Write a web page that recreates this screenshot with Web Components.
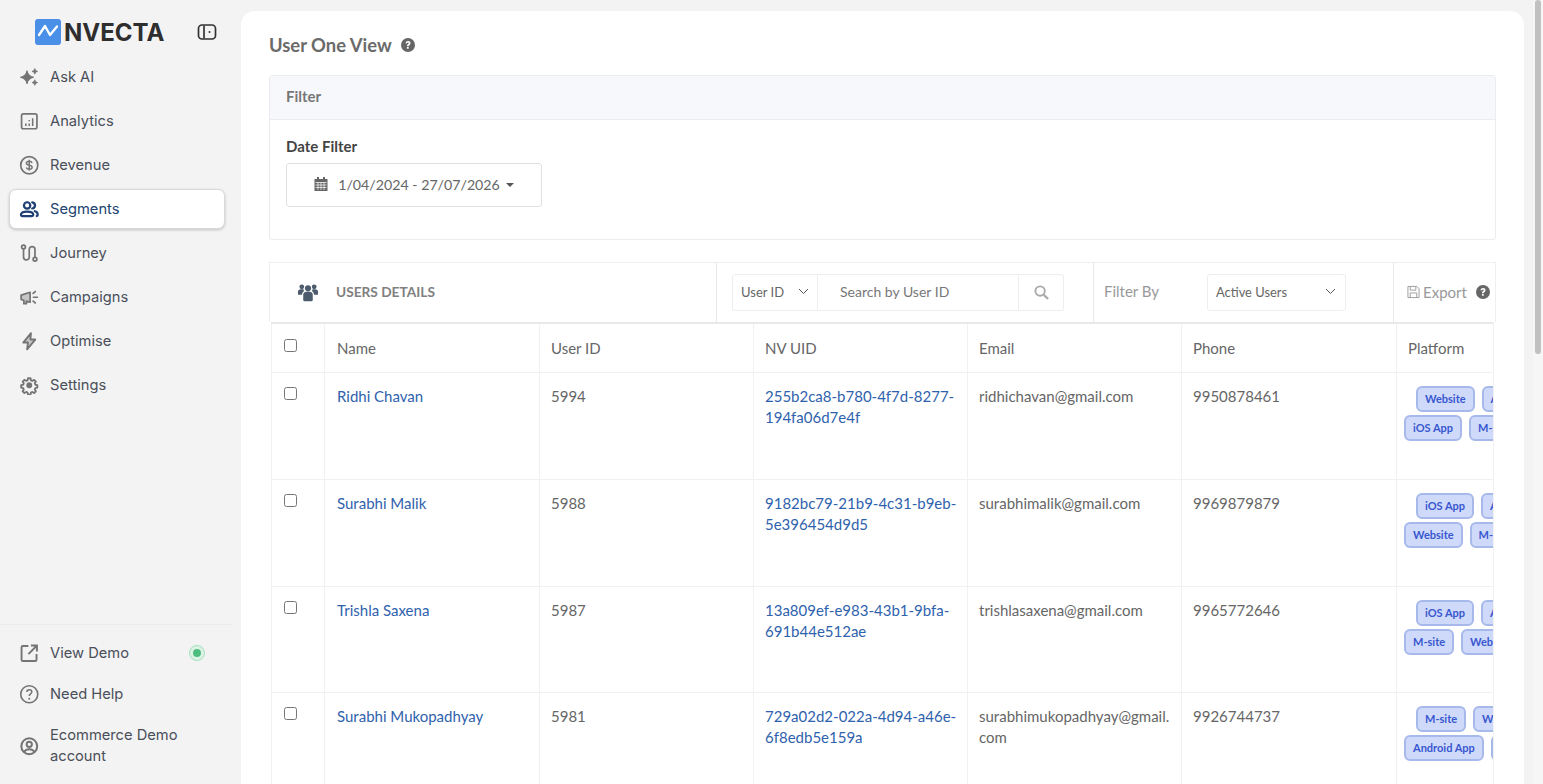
<!DOCTYPE html>
<html>
<head>
<meta charset="utf-8">
<title>User One View</title>
<style>
html, body { margin: 0; height: 100%; overflow: hidden; }
body { background: #f3f3f3; font-family: "Lato", "Liberation Sans", sans-serif; color: #555; }
</style>
</head>
<body>
<nv-shell>
	<nv-sidebar slot="side"></nv-sidebar>
	<nv-page slot="main">
		<nv-filter-panel></nv-filter-panel>
		<nv-users-toolbar></nv-users-toolbar>
		<nv-users-table></nv-users-table>
	</nv-page>
</nv-shell>

<script>
const ICONS = {
	ask: '<path d="M9.400 4.400Q10.600 10.800 17 12 10.600 13.200 9.400 19.600 8.200 13.200 1.800 12 8.200 10.800 9.400 4.400z" fill="currentColor" stroke="currentColor" stroke-width="1.200" stroke-linejoin="round"/><path d="M18.500 1.800Q19 4.600 21.800 5.100 19 5.600 18.500 8.400 18 5.600 15.200 5.100 18 4.600 18.500 1.800zM18.500 14.900Q19 17.700 21.800 18.200 19 18.700 18.500 21.500 18 18.700 15.200 18.200 18 17.700 18.500 14.900z" fill="currentColor" stroke="currentColor" stroke-width=".8" stroke-linejoin="round"/>',
	analytics: '<rect x="3" y="3.300" width="18" height="17.500" rx="2" fill="none" stroke="currentColor" stroke-width="2"/><path d="M8 17.500v-3M12 17.500v-3M12 12v-1.500M16 17.500v-9" fill="none" stroke="currentColor" stroke-width="1.800"/>',
	revenue: '<circle cx="12" cy="12" r="10" fill="none" stroke="currentColor" stroke-width="2"/><path d="M15.400 9.300c-.5-1.300-1.800-2-3.400-2-1.900 0-3.300 1-3.300 2.400 0 3.300 6.700 1.500 6.700 4.700 0 1.400-1.500 2.400-3.400 2.400-1.700 0-3-.8-3.500-2.100M12 5.500v13" fill="none" stroke="currentColor" stroke-width="1.700"/>',
	segments: '<circle cx="9.500" cy="7.500" r="3.700" fill="none" stroke="currentColor" stroke-width="2.600"/><path d="M2.300 18.500c0-2.400 2-3.800 7.200-3.800s7.200 1.400 7.200 3.800c0 1-.6 1.500-1.600 1.500H3.900c-1 0-1.600-.5-1.600-1.500z" fill="none" stroke="currentColor" stroke-width="2.600"/><path d="M15.500 3.900c2 .3 3.200 1.800 3.200 3.600s-1.200 3.300-3.200 3.600M18.500 14.300c2.300.5 3.400 1.900 3.400 3.700 0 1-.3 1.700-1.100 2" fill="none" stroke="currentColor" stroke-width="2.600" stroke-linecap="round"/>',
	journey: '<circle cx="5.300" cy="4.700" r="2.200" fill="none" stroke="currentColor" stroke-width="2"/><circle cx="18.700" cy="19" r="2.200" fill="none" stroke="currentColor" stroke-width="2"/><path d="M5.300 6.900v9.600a3.300 3.300 0 0 0 6.700 0v-9a3.350 3.350 0 0 1 6.700 0v9.300" fill="none" stroke="currentColor" stroke-width="2"/>',
	campaigns: '<path d="M2.500 9.500l10.500-3.300v11.600l-4.300-1.300v3H5.700v-3.900l-3.200-1z" fill="currentColor" fill-opacity=".35" stroke="currentColor" stroke-width="2" stroke-linejoin="round"/><path d="M16.500 7.500l2.500-2.200M17 12h4.500M16.500 16.500l2.500 2.200" fill="none" stroke="currentColor" stroke-width="2" stroke-linecap="round"/>',
	optimise: '<path d="M14 2.500L5 13.500h5.500L9.500 21.500l9.500-11.500h-5.700z" fill="currentColor" fill-opacity=".35" stroke="currentColor" stroke-width="2.200" stroke-linejoin="round"/>',
	settings: '<path d="M10.300 2.500h3.400l.6 2.800 1.900.8 2.400-1.500 2.400 2.400-1.500 2.400.8 1.900 2.700.6v3.400l-2.700.6-.8 1.900 1.500 2.400-2.400 2.400-2.400-1.500-1.900.8-.6 2.800h-3.400l-.6-2.800-1.900-.8-2.400 1.500-2.400-2.400 1.500-2.400-.8-1.900-2.700-.6v-3.400l2.700-.6.8-1.900-1.500-2.400 2.400-2.400 2.400 1.500 1.900-.8z" fill="none" stroke="currentColor" stroke-width="2.500" stroke-linejoin="round" transform="translate(1.700 1.700) scale(.86)"/><circle cx="12" cy="12" r="3.400" fill="currentColor"/>',
	demo: '<path d="M11 3.500H4.500A1.500 1.500 0 0 0 3 5v14.500A1.500 1.500 0 0 0 4.500 21H19a1.500 1.500 0 0 0 1.500-1.500V13" fill="none" stroke="currentColor" stroke-width="2.200"/><path d="M14 3h7v7M20.500 3.500L11 13" fill="none" stroke="currentColor" stroke-width="2.200"/>',
	help: '<circle cx="12" cy="12" r="10" fill="none" stroke="currentColor" stroke-width="1.900"/><path d="M9.100 9.500c0-1.700 1.300-2.800 3-2.800s2.900 1.100 2.900 2.500c0 2.300-3 2.300-3 4.800" fill="none" stroke="currentColor" stroke-width="1.800"/><circle cx="12" cy="17.300" r="1.200" fill="currentColor"/>',
	account: '<circle cx="12" cy="12" r="9.300" fill="none" stroke="currentColor" stroke-width="2.400"/><circle cx="12" cy="9.800" r="3.100" fill="none" stroke="currentColor" stroke-width="2.300"/><path d="M6.300 18.800c.6-2.100 2.800-3.300 5.700-3.300s5.100 1.200 5.700 3.300" fill="none" stroke="currentColor" stroke-width="2.300"/>'
};

const QUESTION = '<circle cx="12" cy="12" r="12" fill="currentColor"/><path d="M7.900 9.200c.2-2.500 1.800-3.900 4.300-3.900s4.100 1.400 4.100 3.500c0 2.900-3.200 2.900-3.200 5.300h-2.900c0-3.800 3.100-3.700 3.100-5.100 0-.8-.6-1.300-1.400-1.300-1 0-1.500.6-1.700 1.700z" fill="#fff"/><rect x="10.200" y="15.500" width="3" height="3" rx=".5" fill="#fff"/>';

class NvShell extends HTMLElement {
	constructor() {
		super();
		this.attachShadow({ mode: 'open' });
		this.shadowRoot.innerHTML = `
		<style>
		:host { display: flex; height: 100vh; overflow: hidden; }
		.side { flex: 0 0 241px; display: flex; }
		.main { flex: 1 1 auto; min-width: 0; padding-top: 11px; display: flex; }
		.bar { flex: 0 0 19px; display: flex; justify-content: flex-end; }
		.track { width: 10px; background: #f6f6f6; }
		.thumb { width: 6px; margin-left: 2px; height: 354px; background: #c1c1c1; border-radius: 3px; }
		</style>
		<div class="side"><slot name="side"></slot></div>
		<div class="main"><slot name="main"></slot></div>
		<div class="bar"><div class="track"><div class="thumb"></div></div></div>`;
	}
}

class NvNavItem extends HTMLElement {
	constructor() {
		super();
		this.attachShadow({ mode: 'open' });
		this.shadowRoot.innerHTML = `
		<style>
		:host { display: flex; align-items: center; min-height: 40px; gap: 11px; padding: 0 0 0 8.500px; box-sizing: border-box; font-size: 14.700px; line-height: 21px; color: #4a4f5a; border: 1px solid transparent; border-radius: 7px; }
		:host([active]) { background: #fff; border-color: #d9d9d9; box-shadow: 0 1px 3px rgba(0,0,0,.2); color: #22436f; }
		svg { flex: 0 0 20.500px; width: 20.500px; height: 20.500px; color: #747474; }
		:host([active]) svg { color: #1d3f72; }
		.label { flex: 1 1 auto; }
		</style>
		<svg viewBox="0 0 24 24"></svg>
		<span class="label"><slot></slot></span>
		<slot name="end"></slot>`;
		this.shadowRoot.querySelector('svg').innerHTML = ICONS[this.getAttribute('icon')] || '';
	}
}

class NvSidebar extends HTMLElement {
	constructor() {
		super();
		this.attachShadow({ mode: 'open' });
		this.shadowRoot.innerHTML = `
		<style>
		:host { display: flex; flex-direction: column; width: 100%; height: 100%; font-family: "Inter", "Liberation Sans", sans-serif; }
		.logo { display: flex; align-items: center; height: 40px; margin-top: 12px; padding: 0 24px 0 35px; }
		.logo svg.mark { width: 26px; height: 26px; flex: none; margin-right: 3px; }
		.logo b { font-size: 24px; font-weight: 700; color: #2e2e2e; flex: 1 1 auto; }
		.logo svg.toggle { width: 20px; height: 20px; flex: none; }
		nav { flex: 1 1 auto; display: flex; flex-direction: column; gap: 4px; padding: 5px 16px 0 9px; }
		footer { border-top: 1px solid #ececec; margin-right: 8px; padding: 8px 8px 16px 9px; display: flex; flex-direction: column; gap: 1px; }
		.dot { width: 8px; height: 8px; border-radius: 50%; background: #4dbd7d; border: 4px solid #dcf2e5; outline: 1px solid #aadfc0; outline-offset: -1px; margin-right: 19px; flex: none; }
		footer nv-nav-item:last-child { margin-top: 9px; }
		</style>
		<div class="logo">
			<svg class="mark" viewBox="0 0 26 26"><rect width="26" height="26" rx="3" fill="#4a90e9"/><path d="M4 16l6-9 5 9 7-8.500" fill="none" stroke="#fff" stroke-width="2.300" stroke-linecap="round" stroke-linejoin="round"/></svg>
			<b>NVECTA</b>
			<svg class="toggle" viewBox="0 0 20 20"><rect x="1.500" y="3" width="17" height="14" rx="3.500" fill="none" stroke="#333" stroke-width="1.700"/><path d="M7 3.500v13" stroke="#333" stroke-width="1.700"/><circle cx="12.500" cy="10" r="1" fill="#333"/></svg>
		</div>
		<nav>
			<nv-nav-item icon="ask">Ask AI</nv-nav-item>
			<nv-nav-item icon="analytics">Analytics</nv-nav-item>
			<nv-nav-item icon="revenue">Revenue</nv-nav-item>
			<nv-nav-item icon="segments" active>Segments</nv-nav-item>
			<nv-nav-item icon="journey">Journey</nv-nav-item>
			<nv-nav-item icon="campaigns">Campaigns</nv-nav-item>
			<nv-nav-item icon="optimise">Optimise</nv-nav-item>
			<nv-nav-item icon="settings">Settings</nv-nav-item>
		</nav>
		<footer>
			<nv-nav-item icon="demo">View Demo<span class="dot" slot="end"></span></nv-nav-item>
			<nv-nav-item icon="help">Need Help</nv-nav-item>
			<nv-nav-item icon="account">Ecommerce Demo account</nv-nav-item>
		</footer>`;
	}
}

class NvPage extends HTMLElement {
	constructor() {
		super();
		this.attachShadow({ mode: 'open' });
		this.shadowRoot.innerHTML = `
		<style>
		:host { display: block; flex: 1 1 auto; min-width: 0; background: #fff; border-radius: 14px 14px 0 0; padding: 0 28px; overflow: hidden; }
		h1 { display: flex; align-items: center; gap: 9px; height: 64px; box-sizing: border-box; padding-top: 4px; margin: 0; font-size: 18.400px; font-weight: 700; color: #6a6a6a; }
		svg { width: 14px; height: 14px; color: #666; }
		</style>
		<h1>User One View <svg viewBox="0 0 24 24">${QUESTION}</svg></h1>
		<slot></slot>`;
	}
}

class NvFilterPanel extends HTMLElement {
	constructor() {
		super();
		this.attachShadow({ mode: 'open' });
		this.shadowRoot.innerHTML = `
		<style>
		:host { display: block; border: 1px solid #ececec; border-radius: 3px; height: 165px; box-sizing: border-box; margin-bottom: 22px; }
		header { height: 43px; line-height: 41px; padding: 0 16px; background: #f7f8fc; border-bottom: 1px solid #ececec; font-size: 15px; font-weight: 700; color: #777; }
		.body { padding: 16px 16px 0; }
		label { display: block; font-size: 15px; font-weight: 700; line-height: 21px; color: #444; margin-bottom: 6px; }
		button { display: flex; align-items: center; justify-content: center; gap: 9px; width: 256px; height: 44px; padding: 0 1px 2px 0; background: #fff; border: 1px solid #e0e0e0; border-radius: 3px; font: inherit; font-size: 14.200px; color: #666; }
		svg.cal { width: 16px; height: 16px; color: #666; }
		i { width: 0; height: 0; border: 4px solid transparent; border-top-color: #555; border-bottom: 0; margin-left: -3px; margin-top: 1px; }
		</style>
		<header>Filter</header>
		<div class="body">
			<label>Date Filter</label>
			<button><svg class="cal" viewBox="0 0 16 16"><path d="M1.500 3h13v12h-13z" fill="currentColor"/><rect x="4" y="1" width="2" height="3" fill="currentColor"/><rect x="10" y="1" width="2" height="3" fill="currentColor"/><path d="M2.500 6.500h11M2.500 9h11M2.500 11.500h11M5 6v8M8 6v8M11 6v8" stroke="#fff" stroke-width=".7"/></svg>1/04/2024 - 27/07/2026 <i></i></button>
		</div>`;
	}
}

class NvUsersToolbar extends HTMLElement {
	constructor() {
		super();
		this.attachShadow({ mode: 'open' });
		this.shadowRoot.innerHTML = `
		<style>
		:host { display: grid; grid-template-columns: 447px 377px 300px 1fr; height: 60px; box-sizing: border-box; border: 1px solid #efefef; border-bottom: 0; font-size: 14px; color: #777; }
		section { display: flex; align-items: center; border-right: 1px solid #e8e8e8; min-width: 0; padding-bottom: 2px; box-sizing: border-box; }
		section:last-child { border-right: 0; }
		.title { padding-left: 28px; gap: 18px; font-size: 13.700px; font-weight: 700; color: #808080; text-transform: uppercase; }
		.title svg { width: 20px; height: 20px; color: #4d5c6c; }
		.search { padding-left: 15px; padding-bottom: 0; }
		.sel { display: flex; align-items: center; justify-content: space-between; box-sizing: border-box; height: 37px; border: 1px solid #eee; border-radius: 3px; background: #fff; font-size: 13px; color: #666; padding-bottom: 2px; }
		.sel svg { width: 11px; height: 7px; color: #555; }
		.a { width: 86px; padding-left: 8px; padding-right: 8px; border-radius: 3px 0 0 3px; }
		.input { box-sizing: border-box; width: 201px; height: 37px; line-height: 33px; border: 1px solid #eee; border-left: 0; padding-left: 22px; font-size: 14px; color: #777; }
		.go { box-sizing: border-box; width: 45px; height: 37px; border: 1px solid #eee; border-left: 0; border-radius: 0 3px 3px 0; display: flex; align-items: center; justify-content: center; color: #aaa; }
		.go svg { width: 15px; height: 15px; }
		.filter { padding-left: 10px; padding-bottom: 0; }
		.filter span { width: 103px; font-size: 15px; color: #999; margin-bottom: 3px; }
		.b { width: 139px; padding-left: 8px; padding-right: 9px; font-size: 12.900px; }
		.export { padding-left: 13px; gap: 3px; font-size: 15px; color: #999; }
		.export svg.s { width: 13px; height: 14px; color: #999; }
		.export svg.q { width: 14px; height: 14px; color: #666; margin-left: 6px; flex: none; }
		</style>
		<section class="title"><svg viewBox="0 0 21 20"><g fill="currentColor"><circle cx="10.500" cy="6" r="3.200"/><circle cx="4" cy="4.500" r="2.500"/><circle cx="17" cy="4.500" r="2.500"/><path d="M5.500 13c0-2.500 2-3.500 5-3.500s5 1 5 3.500v5.500c0 .8-.5 1.200-1.200 1.200H6.700c-.7 0-1.200-.4-1.200-1.200z"/><path d="M0 9.500c0-1.500 1-2.500 3-2.500h3c-.3.800 0 1.500.5 2C5 10 4.300 11 4.200 13H1c-.6 0-1-.4-1-1zM21 9.500c0-1.500-1-2.500-3-2.500h-3c.3.800 0 1.500-.5 2 1.500 1 2.200 2 2.300 4h3.200c.6 0 1-.4 1-1z"/></g></svg>Users Details</section>
		<section class="search">
			<div class="sel a">User ID<svg viewBox="0 0 11 7"><path d="M1 1l4.500 4.500L10 1" fill="none" stroke="currentColor"/></svg></div>
			<div class="input">Search by User ID</div>
			<div class="go"><svg viewBox="0 0 16 16"><circle cx="6.500" cy="6.500" r="5" fill="none" stroke="currentColor" stroke-width="2"/><path d="M10.500 10.500L15 15" stroke="currentColor" stroke-width="2.400"/></svg></div>
		</section>
		<section class="filter">
			<span>Filter By</span>
			<div class="sel b">Active Users<svg viewBox="0 0 11 7"><path d="M1 1l4.500 4.500L10 1" fill="none" stroke="currentColor"/></svg></div>
		</section>
		<section class="export">
			<svg class="s" viewBox="0 0 14 14"><path d="M1 1h9.500L13 3.500V13H1zM3.500 1.500v3.500h6V1.500M3.500 13V8h7v5" fill="none" stroke="currentColor"/></svg>Export<svg class="q" viewBox="0 0 24 24">${QUESTION}</svg>
		</section>`;
	}
}

class NvTag extends HTMLElement {
	constructor() {
		super();
		this.attachShadow({ mode: 'open' });
		this.shadowRoot.innerHTML = `
		<style>
		:host { display: block; flex: none; box-sizing: border-box; height: 26px; line-height: 22px; padding: 0 7px; background: #cfdafb; border: 2px solid #a6b9ea; border-radius: 6px; font-size: 11px; font-weight: 700; color: #3957cf; white-space: nowrap; }
		</style>
		<slot></slot>`;
	}
}

const USERS = [
	{ name: 'Ridhi Chavan', id: '5994', uid: '255b2ca8-b780-4f7d-8277-194fa06d7e4f', email: 'ridhichavan@gmail.com', phone: '9950878461', tags: [['Website', 'Android App'], ['iOS App', 'M-site']] },
	{ name: 'Surabhi Malik', id: '5988', uid: '9182bc79-21b9-4c31-b9eb-5e396454d9d5', email: 'surabhimalik@gmail.com', phone: '9969879879', tags: [['iOS App', 'Android App'], ['Website', 'M-site']] },
	{ name: 'Trishla Saxena', id: '5987', uid: '13a809ef-e983-43b1-9bfa-691b44e512ae', email: 'trishlasaxena@gmail.com', phone: '9965772646', tags: [['iOS App', 'Android App'], ['M-site', 'Website']] },
	{ name: 'Surabhi Mukopadhyay', id: '5981', uid: '729a02d2-022a-4d94-a46e-6f8edb5e159a', email: 'surabhimukopadhyay@gmail.com', phone: '9926744737', tags: [['M-site', 'Website'], ['Android App', 'iOS App']] }
];

class NvUsersTable extends HTMLElement {
	constructor() {
		super();
		this.attachShadow({ mode: 'open' });
		const rows = USERS.map(u => `
			<tr>
				<td class="check"><input type="checkbox"></td>
				<td class="nm"><a>${u.name}</a></td>
				<td>${u.id}</td>
				<td class="wide"><a>${u.uid}</a></td>
				<td class="wide">${u.email.replace('gmail.', 'gmail.<wbr>')}</td>
				<td>${u.phone}</td>
				<td class="tags">
					${u.tags.map(r => `<div class="line">${r.map(t => `<nv-tag>${t}</nv-tag>`).join('')}</div>`).join('')}
				</td>
			</tr>`).join('');
		this.shadowRoot.innerHTML = `
		<style>
		:host { display: block; overflow: hidden; margin: 0 2px 0 2px; border-top: 2px solid #e9e9e9; border-right: 1px solid #f1f1f1; font-size: 15px; line-height: 21px; color: #666; }
		table { border-collapse: collapse; table-layout: fixed; width: 1260px; border-left: 1px solid #efefef; }
		th, td { border: 1px solid #f1f1f1; border-top: 0; padding: 13px 11px 0; vertical-align: top; text-align: left; font-weight: 400; overflow-wrap: break-word; }
		th { height: 48px; box-sizing: border-box; vertical-align: middle; padding: 1px 11px 0; }
		td { height: 107px; box-sizing: border-box; }
		tbody tr:nth-child(3) td { height: 106px; }
		td.wide { padding-right: 4px; }
		.nm, th:nth-child(2) { padding-left: 12px; }
		a { color: #2f62ad; }
		.check { padding: 14px 0 0 12px; }
		th.check { vertical-align: top; padding-top: 15px; }
		input { margin: 0; width: 13px; height: 13px; display: block; }
		.tags { padding: 13px 0 0 7px; }
		.line { display: flex; gap: 7px; margin-bottom: 3px; }
		.line:first-child { padding-left: 12px; }
		</style>
		<table>
			<colgroup><col style="width:53px"><col style="width:215px"><col style="width:214px"><col style="width:214px"><col style="width:214px"><col style="width:215px"><col></colgroup>
			<thead><tr>
				<th class="check"><input type="checkbox"></th>
				<th>Name</th><th>User ID</th><th>NV UID</th><th>Email</th><th>Phone</th><th>Platform</th>
			</tr></thead>
			<tbody>${rows}</tbody>
		</table>`;
	}
}

customElements.define('nv-shell', NvShell);
customElements.define('nv-nav-item', NvNavItem);
customElements.define('nv-sidebar', NvSidebar);
customElements.define('nv-page', NvPage);
customElements.define('nv-filter-panel', NvFilterPanel);
customElements.define('nv-users-toolbar', NvUsersToolbar);
customElements.define('nv-tag', NvTag);
customElements.define('nv-users-table', NvUsersTable);
</script>
</body>
</html>
